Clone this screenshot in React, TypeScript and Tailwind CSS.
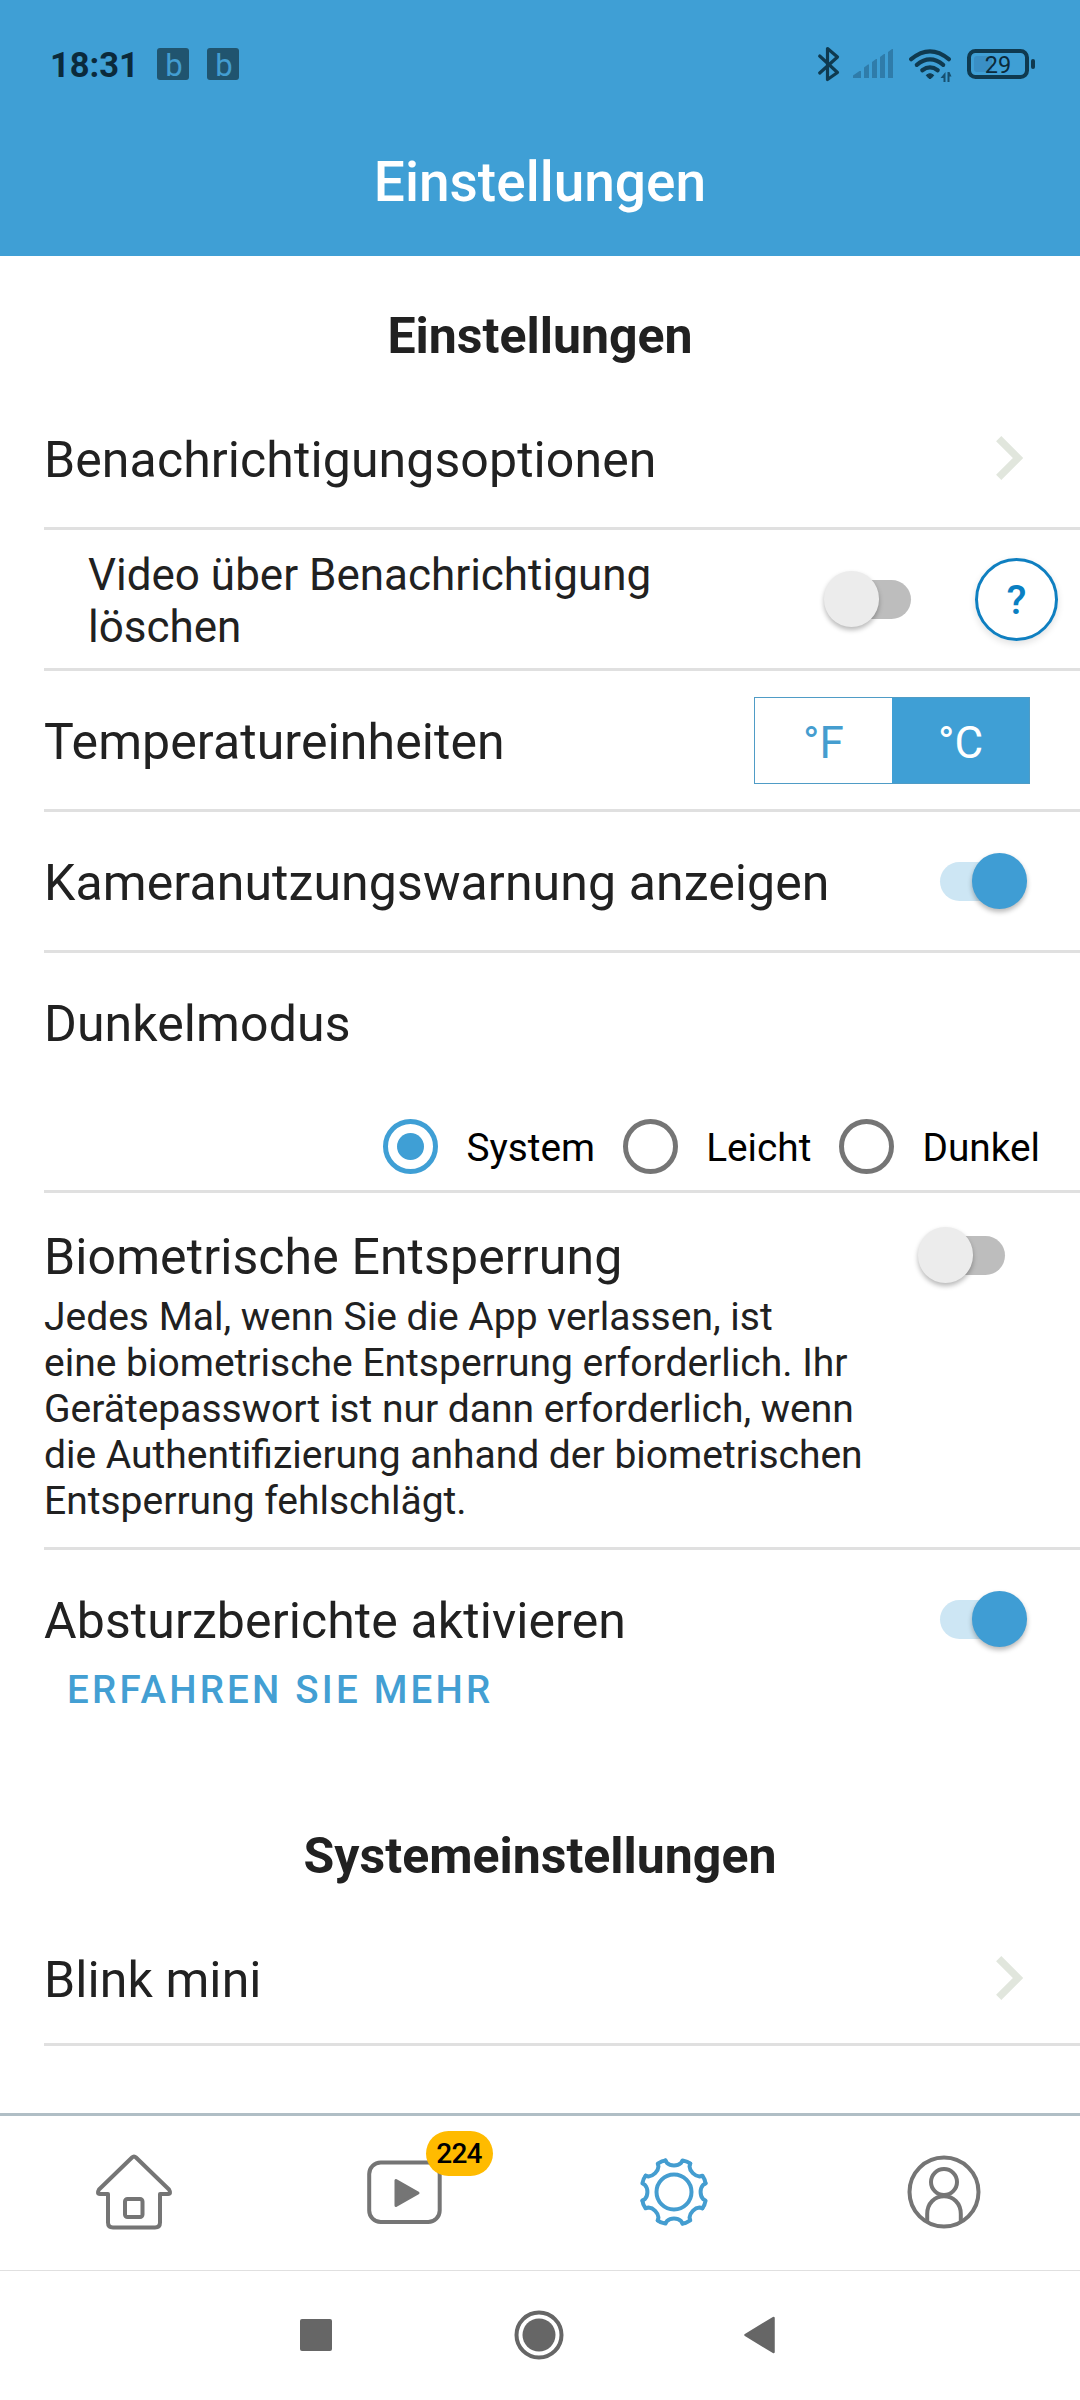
import React, { useState } from "react";
import clsx from "clsx";

interface SwitchProps {
  checked: boolean;
  label: string;
  onChange: (value: boolean) => void;
}

function Switch({ checked, label, onChange }: SwitchProps) {
  return (
    <button
      role="switch"
      aria-checked={checked}
      aria-label={label}
      onClick={() => onChange(!checked)}
      className="relative flex h-14 w-[87px] flex-none items-center"
    >
      <span
        className={clsx(
          "h-[39px] w-[66px] rounded-full",
          checked ? "bg-[#cde6f4]" : "ml-[21px] bg-[#bdbdbd]"
        )}
      />
      <span
        className={clsx(
          "absolute top-0 h-14 w-[55px] rounded-full shadow-[0_3px_5px_rgba(0,0,0,0.28)]",
          checked ? "right-0 bg-[#3f9dd4]" : "left-0 bg-[#ececec]"
        )}
      />
    </button>
  );
}

function Chevron() {
  return (
    <svg width="27" height="44" viewBox="0 0 27 44" fill="none">
      <path d="M2.7 2.7 22 22 2.7 41.3" stroke="#e1e6dd" strokeWidth="7.4" />
    </svg>
  );
}

interface RowProps {
  title: string;
  children?: React.ReactNode;
  className?: string;
}

function Row({ title, children, className }: RowProps) {
  return (
    <div
      className={clsx(
        "ml-11 flex items-center justify-between border-b-[3px] border-[#e0e0e0]",
        className
      )}
    >
      <span className="pt-1 text-[50px] leading-[58px] tracking-[0.1px]">{title}</span>
      {children}
    </div>
  );
}

function StatusBar() {
  return (
    <div className="flex h-[128px] items-center justify-between pl-[50px] pr-[45px]">
      <div className="flex items-center">
        <span className="w-[88px] pt-0.5 text-[34.5px] font-bold leading-10 text-[#0b2a3b]">
          18:31
        </span>
        <div className="ml-[19px] flex gap-[18px]">
          {[0, 1].map((n) => (
            <span
              key={n}
              className="flex h-8 w-8 items-center justify-center rounded-[3px] bg-[#20546f] pl-0.5 pt-[3px] text-[31px] leading-8 text-[#439dd1]"
            >
              b
            </span>
          ))}
        </div>
      </div>

      <svg width="218" height="36" viewBox="817 46 218 36" fill="none">
        <path
          d="M819.7 56 837.5 72.5 827.5 79.5V48.5L837.5 57 819.7 73"
          stroke="#0f3a50"
          strokeWidth="3.2"
          strokeLinecap="round"
          strokeLinejoin="round"
        />
        <path
          d="M853 78v-2.5l6.5-4.5H861v7zM864 78V67.5l4-3H869V78zM872 78V62l4-3h1v19zM880 78V57l4-3h1v24zM888 78V52l4-3h1v29z"
          fill="#2f7caa"
        />
        <g stroke="#0f3a50" strokeWidth="4.2" strokeLinecap="round">
          <path d="M911.2 59.2Q930 43.5 948.8 59.2" />
          <path d="M916.8 64.8Q930 54 943.2 64.8" />
          <path d="M922.3 70.3Q930 64.5 937.7 70.3" />
        </g>
        <path
          d="M926.2 75.3q3.8-3.2 7.6 0l-2.4 2.7q-1.4 1.3-2.8 0z"
          fill="#0f3a50"
          stroke="#0f3a50"
        />
        <path d="M945.5 72v10h-2v-4h-3l5-6M947.5 82V72h2l2 4.5h-2V82z" fill="#175070" />
        <rect x="974" y="56" width="18" height="16" rx="3" fill="#3a8fc5" />
        <rect x="969" y="51" width="58" height="26" rx="6.5" stroke="#0f3a50" strokeWidth="4" />
        <rect x="1031" y="59" width="4" height="10" rx="2" fill="#0f3a50" />
        <text x="998" y="72.8" fontSize="23.5" textAnchor="middle" fill="#0b2a3b">
          29
        </text>
      </svg>
    </div>
  );
}

function HomeIcon() {
  return (
    <svg width="80" height="80" viewBox="0 0 80 80" fill="none" stroke="#757575" strokeWidth="4">
      <path
        strokeLinejoin="round"
        d="M38 5.5q2-2 4 0L75 37.500q2.5 4.3-1 4.5H66v28.500q0 5-5 5H19q-5 0-5-5V42H6q-3.5-.2-1-4.5z"
      />
      <rect x="31" y="47" width="17.5" height="18" rx="2.5" />
    </svg>
  );
}

function PlayIcon() {
  return (
    <svg width="75" height="64" viewBox="0 0 75 64" fill="none">
      <rect x="2.2" y="2.5" width="70.5" height="59.5" rx="11.5" stroke="#757575" strokeWidth="4" />
      <path d="M29 20.5v25l22-12.5z" fill="#757575" stroke="#757575" strokeWidth="3" strokeLinejoin="round" />
    </svg>
  );
}

const COG_TEETH = [0, 45, 90, 135, 180, 225, 270, 315];

function CogIcon() {
  return (
    <svg width="70" height="70" viewBox="-35 -35 70 70" fill="none" stroke="#449dd0" strokeWidth="4">
      {COG_TEETH.map((deg) => (
        <path
          key={deg}
          transform={`rotate(${deg})`}
          strokeLinecap="round"
          strokeLinejoin="round"
          d="M-8.6-31.6-7-29Q-4.3-26.6 0-26.6T7-29L8.6-31.6Q13.8-30.6 16.26-28.4"
        />
      ))}
      <circle r="17.5" />
    </svg>
  );
}

function ProfileIcon() {
  return (
    <svg width="76" height="76" viewBox="-38 -38 76 76" fill="none" stroke="#757575" strokeWidth="4">
      <circle r="34.5" />
      <circle cy="-10" r="13" />
      <path d="M-16.8 30V22C-16.8 11-9 4.2 0 4.2S16.8 11 16.8 22v8" />
    </svg>
  );
}

const THEMES = [
  { id: "system", label: "System" },
  { id: "light", label: "Leicht" },
  { id: "dark", label: "Dunkel" },
];

export default function App() {
  const [deleteVideo, setDeleteVideo] = useState(false);
  const [unit, setUnit] = useState("C");
  const [usageWarning, setUsageWarning] = useState(true);
  const [theme, setTheme] = useState("system");
  const [biometric, setBiometric] = useState(false);
  const [crashReports, setCrashReports] = useState(true);

  return (
    <div className="flex h-[2400px] w-[1080px] flex-col overflow-hidden bg-white font-[Roboto,sans-serif] text-[#212121]">
      <header className="h-64 flex-none bg-[#3f9fd5]">
        <StatusBar />
        <h1 className="pt-[22px] text-center text-[55px] font-medium leading-[64px] text-white">
          Einstellungen
        </h1>
      </header>

      <main className="h-[1857px] flex-none">
        <h2 className="h-[133px] pt-[51px] text-center text-[50px] font-bold leading-[58px]">
          Einstellungen
        </h2>

        <Row title="Benachrichtigungsoptionen" className="h-[141px] pr-[57px]">
          <Chevron />
        </Row>

        <div className="ml-11 flex h-[141px] items-center border-b-[3px] border-[#e0e0e0] pl-11 pr-[22px]">
          <p className="w-[600px] flex-none pt-[3px] text-[44px] leading-[52px]">
            Video über Benachrichtigung löschen
          </p>
          <div className="ml-auto flex items-center gap-16">
            <Switch checked={deleteVideo} label="Video löschen" onChange={setDeleteVideo} />
            <button className="flex size-[83px] items-center justify-center rounded-full border-[3px] border-[#0f7fc0] pt-1 text-[41px] font-medium text-[#0a7fc2] shadow-[0_3px_7px_rgba(0,0,0,0.12)]">
              ?
            </button>
          </div>
        </div>

        <Row title="Temperatureinheiten" className="h-[141px] pr-[50px]">
          <div className="flex h-[87px] w-[276px] border border-[#4f9cc6] text-[44px]">
            {["F", "C"].map((u) => (
              <button
                key={u}
                onClick={() => setUnit(u)}
                className={clsx(
                  "flex-1 pt-[5px]",
                  unit === u ? "bg-[#3f9fd5] text-white" : "text-[#459dcf]"
                )}
              >
                °{u}
              </button>
            ))}
          </div>
        </Row>

        <Row title="Kameranutzungswarnung anzeigen" className="h-[141px] pr-[53px]">
          <Switch checked={usageWarning} label="Kameranutzungswarnung" onChange={setUsageWarning} />
        </Row>

        <div className="ml-11 h-60 border-b-[3px] border-[#e0e0e0] pr-10 pt-[42px]">
          <p className="text-[50px] leading-[58px] tracking-[0.1px]">Dunkelmodus</p>
          <div className="mt-[63px] flex items-center justify-end gap-7">
            {THEMES.map((t) => (
              <button
                key={t.id}
                onClick={() => setTheme(t.id)}
                className="flex items-center gap-7 text-[38.8px] leading-[58px] text-black"
              >
                <span
                  className={clsx(
                    "flex size-[55px] items-center justify-center rounded-full border-[5.5px]",
                    theme === t.id ? "border-[#3f9fd5]" : "border-[#757575]"
                  )}
                >
                  {theme === t.id && <span className="size-[27px] rounded-full bg-[#3f9fd5]" />}
                </span>
                <span className="pt-[3px]">{t.label}</span>
              </button>
            ))}
          </div>
        </div>

        <div className="ml-11 h-[357px] border-b-[3px] border-[#e0e0e0] pr-[75px] pt-[34px]">
          <div className="flex items-start justify-between">
            <p className="pt-px text-[50px] leading-[58px] tracking-[0.1px]">
              Biometrische Entsperrung
            </p>
            <Switch checked={biometric} label="Biometrische Entsperrung" onChange={setBiometric} />
          </div>
          <p className="mt-2 w-[835px] text-[39px] leading-[46px]">
            Jedes Mal, wenn Sie die App verlassen, ist
            <br />
            eine biometrische Entsperrung erforderlich. Ihr Gerätepasswort ist nur dann erforderlich, wenn
            die Authentifizierung anhand der biometrischen Entsperrung fehlschlägt.
          </p>
        </div>

        <div className="ml-11 h-[252px] pr-[53px] pt-[41px]">
          <div className="flex items-start justify-between">
            <p className="pt-px text-[50px] leading-[58px] tracking-[0.1px]">
              Absturzberichte aktivieren
            </p>
            <Switch checked={crashReports} label="Absturzberichte" onChange={setCrashReports} />
          </div>
          <button className="ml-[23px] mt-[17px] text-[38.5px] font-medium leading-[46px] tracking-[3.2px] text-[#439fd3]">
            ERFAHREN SIE MEHR
          </button>
        </div>

        <h2 className="h-[111px] pt-[25px] text-center text-[50px] font-bold leading-[58px]">
          Systemeinstellungen
        </h2>
        <Row title="Blink mini" className="h-[133px] pr-[57px]">
          <Chevron />
        </Row>
      </main>

      <nav className="grid h-[157px] flex-none grid-cols-4 place-items-center border-t-[3px] border-[#b0bec5] pb-0.5 [&>*]:mr-0.5">
        <HomeIcon />
        <div className="relative">
          <PlayIcon />
          <span className="absolute -top-[29px] left-[59px] flex h-[45px] w-[67px] items-center justify-center rounded-full bg-[#ffbb00] pt-px text-[28px] font-medium tracking-[-0.8px] text-black">
            224
          </span>
        </div>
        <CogIcon />
        <ProfileIcon />
      </nav>

      {/* Android navigation keys */}
      <div className="flex h-[130px] flex-none items-center border-t border-[#e0e0e0] pb-0.5 pl-[300px]">
        <span className="h-8 w-8 rounded-[2px] bg-[#666666]" />
        <svg width="50" height="50" viewBox="-25 -25 50 50" className="ml-[182px]">
          <circle r="22.5" fill="none" stroke="#666666" strokeWidth="4" />
          <circle r="16.5" fill="#666666" />
        </svg>
        <svg width="31" height="38" viewBox="0 0 31 38" className="ml-[180px]">
          <path
            d="M1.5 19 29.5 2v34z"
            fill="#666666"
            stroke="#666666"
            strokeWidth="2.5"
            strokeLinejoin="round"
          />
        </svg>
      </div>
    </div>
  );
}
